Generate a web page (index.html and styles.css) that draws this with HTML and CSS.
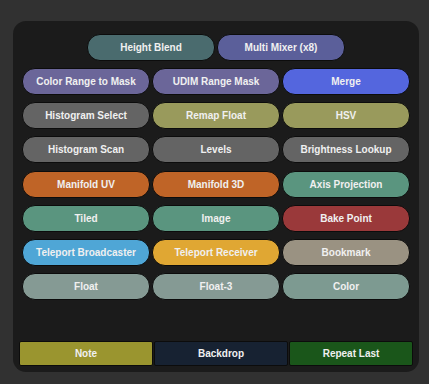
FILE: index.html
```html
<!DOCTYPE html>
<html lang="en">

<head>
    <meta charset="UTF-8">
    <title>Node Palette</title>
    <link rel="stylesheet" href="styles.css">
</head>

<body>

    <main class="panel">
        <div class="top-row">
            <button class="node c-height">Height Blend</button>
            <button class="node c-mixer">Multi Mixer (x8)</button>
        </div>
        <section class="node-grid">
            <button class="node c-mask">Color Range to Mask</button>
            <button class="node c-mask">UDIM Range Mask</button>
            <button class="node c-merge">Merge</button>

            <button class="node c-grey">Histogram Select</button>
            <button class="node c-olive">Remap Float</button>
            <button class="node c-olive">HSV</button>

            <button class="node c-grey">Histogram Scan</button>
            <button class="node c-grey">Levels</button>
            <button class="node c-grey">Brightness Lookup</button>

            <button class="node c-orange">Manifold UV</button>
            <button class="node c-orange">Manifold 3D</button>
            <button class="node c-green">Axis Projection</button>

            <button class="node c-green">Tiled</button>
            <button class="node c-green">Image</button>
            <button class="node c-red">Bake Point</button>

            <button class="node c-blue">Teleport Broadcaster</button>
            <button class="node c-yellow">Teleport Receiver</button>
            <button class="node c-taupe">Bookmark</button>

            <button class="node c-float">Float</button>
            <button class="node c-float">Float-3</button>
            <button class="node c-color">Color</button>
        </section>
        <footer class="bottom-row">
            <button class="action c-note">Note</button>
            <button class="action c-backdrop">Backdrop</button>
            <button class="action c-repeat">Repeat Last</button>
        </footer>
    </main>

</body>

</html>
```

FILE: styles.css
```css
* {
    margin: 0;
    padding: 0;
    box-sizing: border-box;
}

body {
    background-color: #313131;
    font-family: 'Liberation Sans', Arial, sans-serif;
    padding: 21px 10px 12px 13px;
}

.panel {
    width: 406px;
    height: 351px;
    background-color: #1b1b1b;
    border-radius: 13px;
    padding: 13px 6px 6px 6px;
    display: flex;
    flex-direction: column;
}

button {
    font-family: 'Liberation Sans', Arial, sans-serif;
    font-weight: bold;
    font-size: 10px;
    color: #f0f0f0;
    border: 1px solid #0c0c0c;
    cursor: pointer;
}

.node {
    height: 27px;
    border-radius: 13px;
}

.top-row {
    display: flex;
    justify-content: center;
    gap: 2px;
    margin-bottom: 7px;
}

.top-row .node {
    width: 128px;
}

.node-grid {
    display: grid;
    grid-template-columns: repeat(3, 128px);
    column-gap: 2px;
    row-gap: 7.2px;
    padding: 0 3px;
}

.bottom-row {
    margin-top: auto;
    display: grid;
    grid-template-columns: 134px 134px 1fr;
    gap: 1px;
}

.action {
    height: 25px;
    border-radius: 2px;
}

.c-height { background-color: #4a6b6e; }
.c-mixer { background-color: #5b5f9a; }
.c-mask { background-color: #6b6699; }
.c-merge { background-color: #5466de; }
.c-grey { background-color: #646464; }
.c-olive { background-color: #999a5c; }
.c-orange { background-color: #bf6427; }
.c-green { background-color: #5a957f; }
.c-red { background-color: #9a393a; }
.c-blue { background-color: #4fa6d6; }
.c-yellow { background-color: #e0a733; }
.c-taupe { background-color: #9a9282; }
.c-float { background-color: #859a94; }
.c-color { background-color: #7d9a91; }

.c-note { background-color: #9a952f; }
.c-backdrop { background-color: #172232; }
.c-repeat { background-color: #1a561a; }
```
